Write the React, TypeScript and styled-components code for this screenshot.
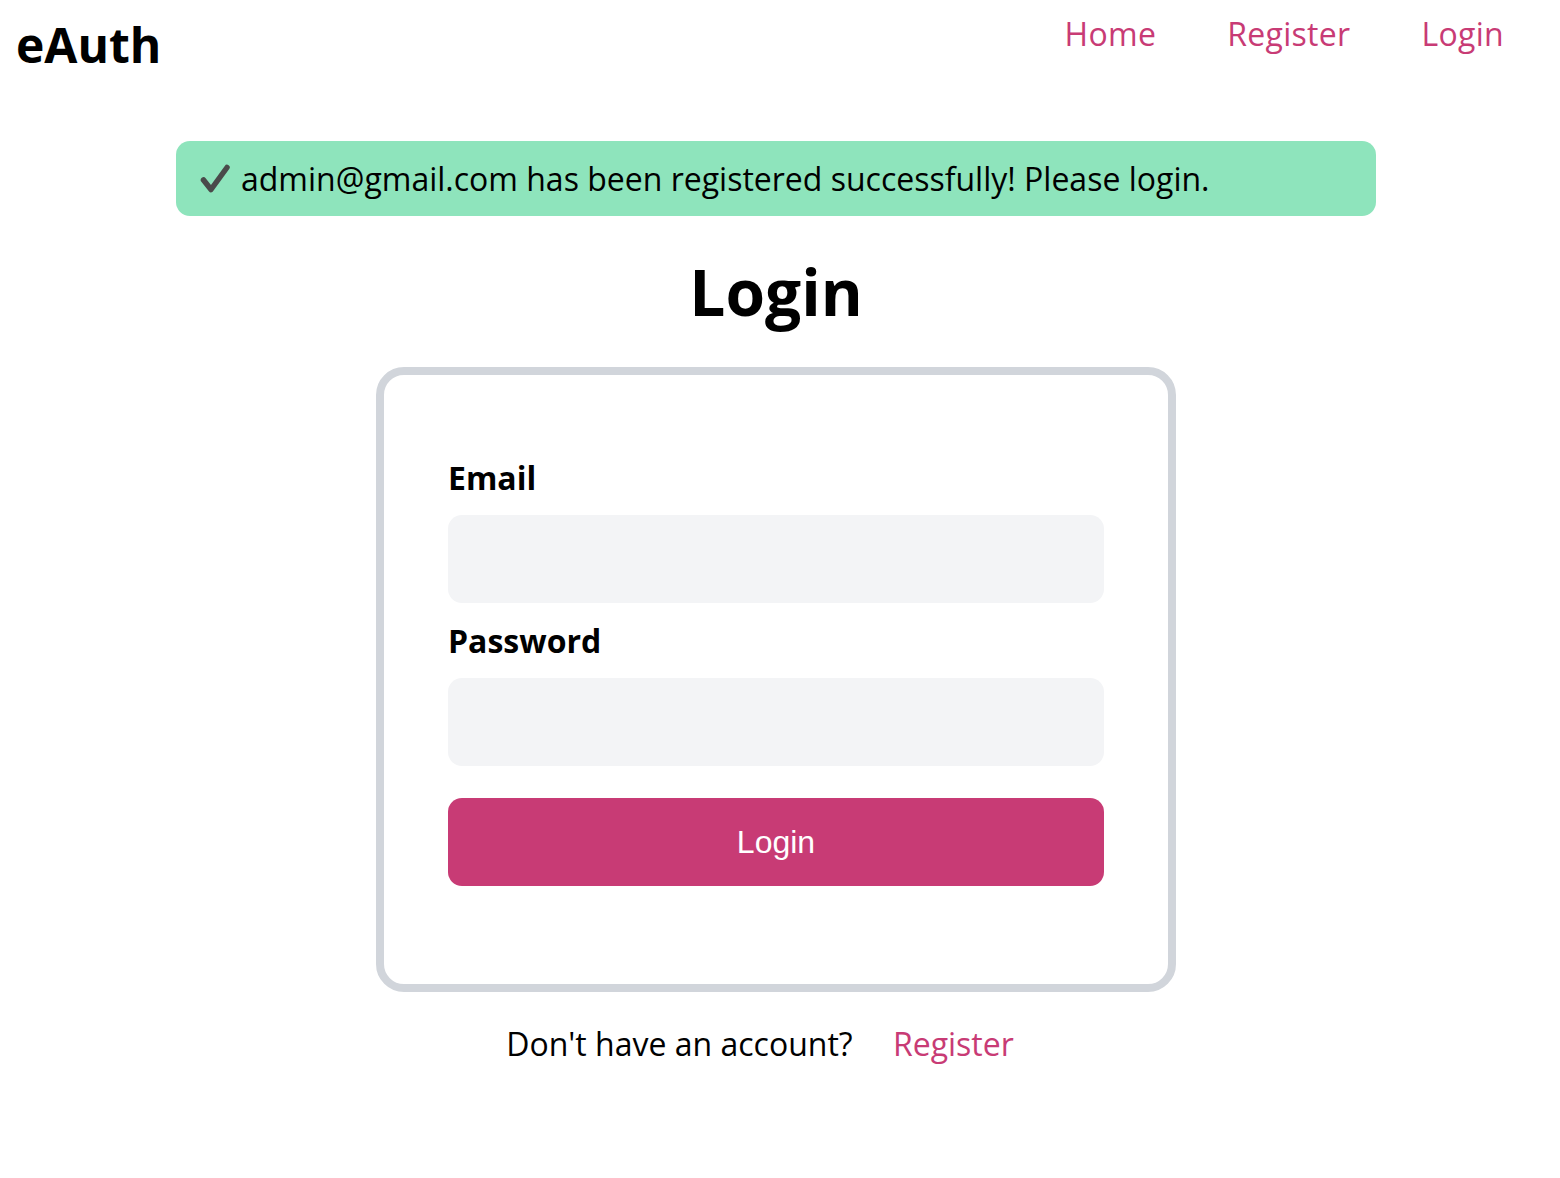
import React from "react";
import styled, { createGlobalStyle } from "styled-components";

const GlobalStyle = createGlobalStyle`
  html, body {
    margin: 0;
    padding: 0;
    background: #ffffff;
  }
  body {
    font-family: "Open Sans", "Noto Sans", sans-serif;
    color: #000000;
  }
  * { box-sizing: border-box; }
`;

const Header = styled.header`
  display: flex;
  justify-content: space-between;
  align-items: flex-start;
  padding: 12px 20.5px 0 16px;
`;

const Logo = styled.h1`
  margin: 0;
  font-size: 48px;
  font-weight: 700;
  line-height: normal;
`;

const Nav = styled.nav`
  display: flex;
  align-items: center;
`;

const NavLink = styled.a`
  font-size: 32px;
  line-height: normal;
  color: #c83b75;
  text-decoration: none;
  padding: 0 35.5px;
  letter-spacing: 0.3px;
`;

const Main = styled.main`
  display: flex;
  flex-direction: column;
  align-items: center;
  padding: 64px 8px 64px 0;
`;

const Alert = styled.div`
  width: 1200px;
  background: #8ee4bc;
  border-radius: 14px;
  padding: 16px 24px;
  font-size: 32px;
  line-height: normal;
  display: flex;
  align-items: center;
  gap: 11px;
`;

const Check = styled.svg`
  width: 30px;
  height: 30px;
  flex: none;
`;

const Title = styled.h2`
  margin: 32px 0;
  font-size: 64px;
  font-weight: 700;
  line-height: normal;
`;

const Card = styled.form`
  width: 800px;
  border: 8px solid #d1d5db;
  border-radius: 28px;
  padding: 81px 64px 98px;
  display: flex;
  flex-direction: column;
`;

const Label = styled.label`
  font-size: 32px;
  font-weight: 700;
  line-height: normal;
  margin-bottom: 16px;
`;

const Input = styled.input`
  height: 88px;
  border: none;
  border-radius: 14px;
  background: #f3f4f6;
  padding: 0 24px;
  font-size: 32px;
  font-family: "Open Sans", sans-serif;
  margin-bottom: 16px;
  outline: none;
`;

const Button = styled.button`
  margin-top: 16px;
  height: 88px;
  border: none;
  border-radius: 14px;
  background: #c83b75;
  color: #ffffff;
  font-family: "Liberation Sans", Arial, sans-serif;
  font-size: 32px;
  cursor: pointer;
`;

const Footer = styled.p`
  margin: 30px 0 0;
  font-size: 32px;
  line-height: normal;
  text-align: center;
`;

const FooterLink = styled.a`
  color: #c83b75;
  text-decoration: none;
  padding: 0 32px;
`;

export default function App() {
  return (
    <>
      <GlobalStyle />
      <Header>
        <Logo>eAuth</Logo>
        <Nav>
          <NavLink href="#">Home</NavLink>
          <NavLink href="#">Register</NavLink>
          <NavLink href="#">Login</NavLink>
        </Nav>
      </Header>
      <Main>
        <Alert>
          <Check viewBox="0 0 30 30">
            <path
              d="M3.5 16 L11 25.5 L27 3.5"
              fill="none"
              stroke="#4a4a4a"
              strokeWidth="5.5"
              strokeLinecap="round"
              strokeLinejoin="round"
            />
          </Check>
          <span>admin@gmail.com has been registered successfully! Please login.</span>
        </Alert>
        <Title>Login</Title>
        <Card onSubmit={(e) => e.preventDefault()}>
          <Label htmlFor="email">Email</Label>
          <Input id="email" type="email" />
          <Label htmlFor="password">Password</Label>
          <Input id="password" type="password" />
          <Button type="submit">Login</Button>
        </Card>
        <Footer>
          Don't have an account? <FooterLink href="#">Register</FooterLink>
        </Footer>
      </Main>
    </>
  );
}
